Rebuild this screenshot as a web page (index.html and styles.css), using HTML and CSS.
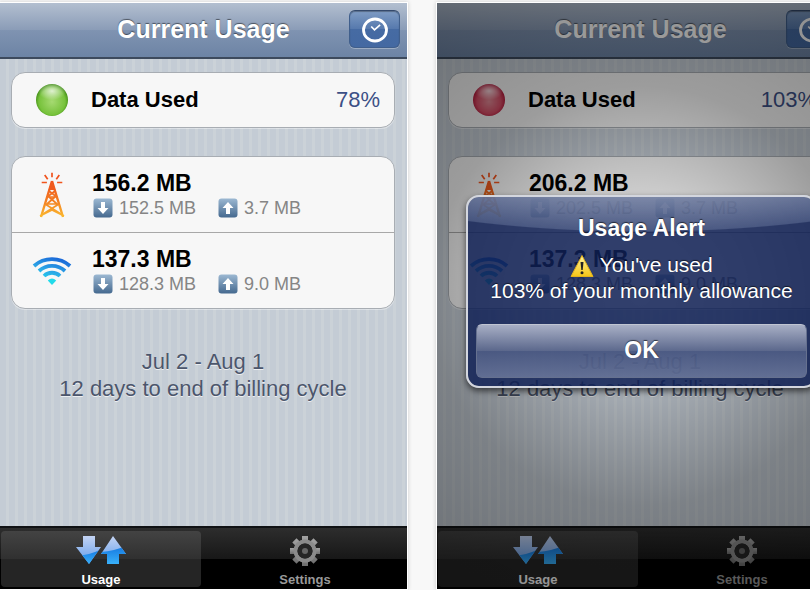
FILE: index.html
```html
<!DOCTYPE html>
<html lang="en">
<head>
    <meta charset="UTF-8">
    <meta name="viewport" content="width=device-width, initial-scale=1.0">
    <title>Current Usage</title>
    <link rel="stylesheet" href="styles.css">
</head>
<body>
    <!-- Shared icons -->
    <svg class="sprite" width="0" height="0" aria-hidden="true">
        <defs>
            <linearGradient id="towerFill" x1="0" y1="0" x2="0" y2="46" gradientUnits="userSpaceOnUse">
                <stop offset="0.2" stop-color="#f0521c"/>
                <stop offset="0.6" stop-color="#f27a22"/>
                <stop offset="1" stop-color="#fbbd30"/>
            </linearGradient>
            <linearGradient id="wifiFill" x1="26" y1="2" x2="18" y2="29" gradientUnits="userSpaceOnUse">
                <stop offset="0" stop-color="#1a68d8"/>
                <stop offset="0.5" stop-color="#2ba5e6"/>
                <stop offset="1" stop-color="#1fe0ee"/>
            </linearGradient>
            <linearGradient id="boxFill" x1="0" y1="0" x2="0" y2="1">
                <stop offset="0" stop-color="#9cb8d2"/>
                <stop offset="1" stop-color="#45698f"/>
            </linearGradient>
            <linearGradient id="arrowFill" x1="0" y1="0" x2="0" y2="1">
                <stop offset="0" stop-color="#c3d3f3"/>
                <stop offset="1" stop-color="#5f9bea"/>
            </linearGradient>
            <linearGradient id="arrowDeep" x1="0" y1="0" x2="0" y2="1">
                <stop offset="0" stop-color="#1477e0"/>
                <stop offset="1" stop-color="#3bb4fb"/>
            </linearGradient>
            <linearGradient id="gearFill" x1="0" y1="0" x2="0" y2="1">
                <stop offset="0" stop-color="#a3a3a3"/>
                <stop offset="1" stop-color="#6f6f6f"/>
            </linearGradient>
            <linearGradient id="warnFill" x1="0" y1="0" x2="0" y2="1">
                <stop offset="0" stop-color="#fff3a0"/>
                <stop offset="1" stop-color="#f5c515"/>
            </linearGradient>
            <clipPath id="downClip"><path d="M7 1h12v11h6L13 29 0 12h7z"/></clipPath>
            <clipPath id="upClip"><path d="M37 1l13 18h-7v10H31V19h-6z"/></clipPath>
        </defs>
        <symbol id="clock" viewBox="0 0 28 28">
            <ellipse cx="14" cy="14" rx="11.5" ry="11" fill="none" stroke="#fff" stroke-width="2.800"/>
            <path d="M10.200 10.500l3.300 3.300 5.600-5" fill="none" stroke="#fff" stroke-width="1.700"/>
        </symbol>
        <symbol id="tower" viewBox="0 0 28 46">
            <g fill="none" stroke="url(#towerFill)">
                <path d="M14 .7v4.6M6.700 3l3 4.300M21.300 3l-3 4.300M3.700 10.500h5.200M19.100 10.500h5.200" stroke-width="1.700"/>
                <path d="M14 9L3 45M14 9l11 36" stroke-width="2.400"/>
                <path d="M11 19l6.500 5M17 19l-6.500 5M10 24l9 8M18 24l-9 8M8.500 25h11M7 32h14M7 32l16 10M21 32L5 42M2 44l12-6 12 6" stroke-width="1.700"/>
            </g>
            <path d="M14 9l3.500 9h-7z" fill="#ef5a1e"/>
        </symbol>
        <symbol id="wifi" viewBox="0 0 40 30">
            <g fill="none" stroke="url(#wifiFill)" stroke-width="3.800">
                <path d="M2 10A27 27 0 0 1 38 10"/>
                <path d="M7 15A19 19 0 0 1 33 15"/>
                <path d="M12 20A11.500 11.500 0 0 1 28 20"/>
            </g>
            <path d="M15.800 24.500q4.200-4 8.400 0L20 29z" fill="#22dbea"/>
        </symbol>
        <symbol id="down" viewBox="0 0 20 20">
            <rect x=".5" y=".5" width="19" height="19" rx="3" fill="url(#boxFill)"/>
            <path d="M8 4h4v6h3.500L10 16 4.500 10H8z" fill="#fff"/>
        </symbol>
        <symbol id="up" viewBox="0 0 20 20">
            <rect x=".5" y=".5" width="19" height="19" rx="3" fill="url(#boxFill)"/>
            <path d="M10 4l5.500 6H12v6H8v-6H4.500z" fill="#fff"/>
        </symbol>
        <symbol id="updown" viewBox="0 0 50 30">
            <path d="M7 1h12v11h6L13 29 0 12h7z" fill="url(#arrowFill)"/>
            <path d="M37 1l13 18h-7v10H31V19h-6z" fill="url(#arrowFill)"/>
            <path d="M0 21q14-1 26-7v16H0z" fill="url(#arrowDeep)" clip-path="url(#downClip)"/>
            <path d="M24 17q14-1 26-6v19H24z" fill="url(#arrowDeep)" clip-path="url(#upClip)"/>
        </symbol>
        <symbol id="gear" viewBox="0 0 32 32">
            <g fill="url(#gearFill)">
                <path d="M13 1h6v5h-6zM13 26h6v5h-6z"/>
                <path d="M1 13h5v6H1zM26 13h5v6h-5z"/>
                <path d="M3.300 7.500l4.200-4.200 4 4-4.200 4.200zM20.500 24.700l4.200-4.200 4 4-4.200 4.200z"/>
                <path d="M24.500 3.300l4.200 4.200-4 4-4.200-4.200zM7.300 20.500l4.200 4.200-4 4-4.200-4.200z"/>
            </g>
            <circle cx="16" cy="16" r="9.500" fill="none" stroke="#8b8b8b" stroke-width="4"/>
            <circle cx="16" cy="16" r="7.500" fill="#262626"/>
            <circle cx="16" cy="16" r="3" fill="#666"/>
        </symbol>
        <symbol id="warning" viewBox="0 0 24 24">
            <path d="M12 1.500L23 22.500H1z" fill="url(#warnFill)" stroke="#e2b21c" stroke-width="1" stroke-linejoin="round"/>
            <path d="M10.500 8h3l-.8 8h-1.400z" fill="#222"/>
            <circle cx="12" cy="18.800" r="1.500" fill="#222"/>
        </symbol>
    </svg>

    <main class="gallery">
        <!-- Normal state -->
        <section class="phone">
            <header class="navbar">
                <h1 class="navbar-title">Current Usage</h1>
                <button class="navbar-button" type="button" aria-label="History"><svg class="icon-clock"><use href="#clock"/></svg></button>
            </header>
            <div class="content">
                <div class="card">
                    <div class="row summary">
                        <span class="row-icon"><span class="light green"></span></span>
                        <span class="summary-label">Data Used</span>
                        <span class="summary-value">78%</span>
                    </div>
                </div>
                <div class="card">
                    <div class="row">
                        <span class="row-icon"><svg class="icon-tower"><use href="#tower"/></svg></span>
                        <div class="row-text">
                            <div class="total">156.2 MB</div>
                            <div class="detail">
                                <span class="stat"><svg class="icon-box"><use href="#down"/></svg>152.5 MB</span>
                                <span class="stat"><svg class="icon-box"><use href="#up"/></svg>3.7 MB</span>
                            </div>
                        </div>
                    </div>
                    <div class="row">
                        <span class="row-icon"><svg class="icon-wifi"><use href="#wifi"/></svg></span>
                        <div class="row-text">
                            <div class="total">137.3 MB</div>
                            <div class="detail">
                                <span class="stat"><svg class="icon-box"><use href="#down"/></svg>128.3 MB</span>
                                <span class="stat"><svg class="icon-box"><use href="#up"/></svg>9.0 MB</span>
                            </div>
                        </div>
                    </div>
                </div>
                <p class="cycle">Jul 2 - Aug 1<br>12 days to end of billing cycle</p>
            </div>
            <nav class="tabbar">
                <a class="tab active" href="#usage"><svg class="icon-updown"><use href="#updown"/></svg>Usage</a>
                <a class="tab" href="#settings"><svg class="icon-gear"><use href="#gear"/></svg>Settings</a>
            </nav>
        </section>

        <!-- Over the limit, alert open -->
        <section class="phone">
            <header class="navbar">
                <h1 class="navbar-title">Current Usage</h1>
                <button class="navbar-button" type="button" aria-label="History"><svg class="icon-clock"><use href="#clock"/></svg></button>
            </header>
            <div class="content">
                <div class="card">
                    <div class="row summary">
                        <span class="row-icon"><span class="light red"></span></span>
                        <span class="summary-label">Data Used</span>
                        <span class="summary-value">103%</span>
                    </div>
                </div>
                <div class="card">
                    <div class="row">
                        <span class="row-icon"><svg class="icon-tower"><use href="#tower"/></svg></span>
                        <div class="row-text">
                            <div class="total">206.2 MB</div>
                            <div class="detail">
                                <span class="stat"><svg class="icon-box"><use href="#down"/></svg>202.5 MB</span>
                                <span class="stat"><svg class="icon-box"><use href="#up"/></svg>3.7 MB</span>
                            </div>
                        </div>
                    </div>
                    <div class="row">
                        <span class="row-icon"><svg class="icon-wifi"><use href="#wifi"/></svg></span>
                        <div class="row-text">
                            <div class="total">137.3 MB</div>
                            <div class="detail">
                                <span class="stat"><svg class="icon-box"><use href="#down"/></svg>128.3 MB</span>
                                <span class="stat"><svg class="icon-box"><use href="#up"/></svg>9.0 MB</span>
                            </div>
                        </div>
                    </div>
                </div>
                <p class="cycle">Jul 2 - Aug 1<br>12 days to end of billing cycle</p>
            </div>
            <nav class="tabbar">
                <a class="tab active" href="#usage"><svg class="icon-updown"><use href="#updown"/></svg>Usage</a>
                <a class="tab" href="#settings"><svg class="icon-gear"><use href="#gear"/></svg>Settings</a>
            </nav>
            <div class="overlay">
                <div class="alert" role="alertdialog" aria-labelledby="alertTitle" aria-describedby="alertText">
                    <h2 class="alert-title" id="alertTitle">Usage Alert</h2>
                    <p class="alert-text" id="alertText"><svg class="icon-warning"><use href="#warning"/></svg> You've used<br>103% of your monthly allowance</p>
                    <button class="alert-button" type="button">OK</button>
                </div>
            </div>
        </section>
    </main>
</body>
</html>
```
FILE: styles.css
```css
* {
    box-sizing: border-box;
}

body {
    margin: 0;
    background: #f8f8f8;
    font-family: "Liberation Sans", Arial, Helvetica, sans-serif;
}

h1, h2, p {
    margin: 0;
}

svg {
    display: block;
    flex: none;
}

.sprite {
    position: absolute;
}

/* Side by side screens, the strip scrolls sideways */
.gallery {
    display: flex;
    gap: 30px;
    min-height: 100vh;
    padding: 3px 0 1px;
    overflow-x: auto;
    scrollbar-width: none;
}

.phone {
    position: relative;
    display: flex;
    flex-direction: column;
    flex: 0 0 calc(50% + 2px);
    min-width: 370px;
    background: repeating-linear-gradient(90deg, #c4ccd5 0 6px, #cbd2d8 6px 9px);
    box-shadow: 0 0 0 1px #fff, 0 0 4px 1px #ccc;
}

/* Navigation bar */
.navbar {
    display: grid;
    grid-template-columns: 51px 1fr 51px;
    align-items: center;
    height: 56px;
    padding: 0 7px 3px;
    background: linear-gradient(#b3bfd0, #8a9cb7 50%, #7f93b1 51%, #6d84a5);
    border-bottom: 2px solid #3d4a5d;
}

.navbar-title {
    grid-column: 2;
    color: #fff;
    font-size: 25px;
    line-height: 30px;
    text-align: center;
    text-shadow: 0 -1px 1px rgba(0, 0, 0, 0.5);
}

.navbar-button {
    display: flex;
    align-items: center;
    justify-content: center;
    height: 38px;
    padding: 2px 0 0;
    background: linear-gradient(#7f9cc4, #5679ad 50%, #466ba3 51%, #4469a2);
    border: 1px solid #405f8c;
    border-top-color: #34496b;
    border-radius: 6px;
    box-shadow: 0 1px 0 rgba(255, 255, 255, 0.3), inset 0 1px 1px rgba(0, 0, 0, 0.3);
    cursor: pointer;
}

/* Grouped cells */
.content {
    flex: 1;
    padding: 13px 12px 0 11px;
}

.card {
    margin-bottom: 28px;
    background: #f7f7f7;
    border: 1px solid #a8adb3;
    border-radius: 14px;
    box-shadow: 0 1px 0 rgba(255, 255, 255, 0.4);
}

.row {
    display: flex;
    align-items: center;
    height: 75px;
}

.row + .row {
    height: 76px;
    border-top: 1px solid #a8a8a8;
}

.row-icon {
    display: flex;
    justify-content: center;
    flex: none;
    width: 79px;
}

.summary {
    height: 54px;
    padding-right: 14px;
}

.summary-label {
    flex: 1;
    color: #000;
    font-size: 22px;
    font-weight: bold;
}

.summary-value {
    color: #3c5086;
    font-size: 22px;
}

.light {
    width: 32px;
    height: 32px;
    border-radius: 50%;
}

.green {
    background: radial-gradient(ellipse 14px 9px at 50% 22%, rgba(255, 255, 255, 0.75), transparent), radial-gradient(circle at 50% 55%, #a6da72, #77c23b 55%, #3f8c14 72%);
}

.red {
    background: radial-gradient(ellipse 14px 9px at 50% 22%, rgba(255, 255, 255, 0.75), transparent), radial-gradient(circle at 50% 55%, #e28a96, #d64d66 50%, #b01436 72%);
}

.total {
    padding-left: 1px;
    color: #000;
    font-size: 23px;
    font-weight: bold;
    line-height: 26px;
}

.detail {
    display: flex;
    gap: 22px;
    padding-left: 2px;
    color: #858585;
    font-size: 18px;
    line-height: 24px;
}

.stat {
    display: flex;
    align-items: center;
    gap: 6px;
}

.cycle {
    padding-top: 11px;
    color: #4c566c;
    font-size: 22px;
    line-height: 27px;
    text-align: center;
    text-shadow: 0 1px 0 rgba(255, 255, 255, 0.7);
}

/* Tab bar */
.tabbar {
    display: flex;
    gap: 4px;
    height: 63px;
    padding: 3px 2px 2px 1px;
    background: linear-gradient(#2d2d2d, #181818 50%, #000 51%);
    border-top: 2px solid #101214;
}

.tab {
    display: flex;
    flex: 1;
    flex-direction: column;
    align-items: center;
    justify-content: space-between;
    padding-top: 4px;
    border-radius: 4px;
    color: #9a9a9a;
    font-size: 13px;
    font-weight: bold;
    line-height: 15px;
    text-decoration: none;
}

.active {
    background: linear-gradient(#434343, #303030 50%, #252525 51%);
    color: #fff;
}

/* Alert */
.overlay {
    position: absolute;
    inset: 0;
    display: flex;
    align-items: center;
    padding: 0 27px 9px 29px;
    background: radial-gradient(circle at 50% 50%, rgba(0, 0, 0, 0.08), rgba(0, 0, 0, 0.17) 100px, rgba(0, 0, 0, 0.37) 210px, rgba(0, 0, 0, 0.45) 360px);
}

.alert {
    width: 100%;
    padding: 17px 8px 8px;
    background: radial-gradient(ellipse 400px 105px at 50% -70px, rgba(190, 200, 220, 0.55) 66%, rgba(130, 145, 180, 0.35) 99%, transparent 100%), rgba(16, 32, 86, 0.84);
    background-clip: padding-box;
    border: 2px solid #d3d6de;
    border-radius: 13px;
    box-shadow: 0 3px 6px rgba(0, 0, 0, 0.6);
    color: #fff;
    text-align: center;
    text-shadow: 0 -1px 1px rgba(0, 0, 0, 0.6);
}

.alert-title {
    margin-bottom: 10px;
    font-size: 23px;
    line-height: 28px;
}

.alert-text {
    margin-bottom: 20px;
    font-size: 21px;
    line-height: 26px;
}

.alert-button {
    width: 100%;
    height: 54px;
    padding: 0 0 2px;
    background: linear-gradient(rgba(190, 196, 214, 0.85), rgba(120, 131, 162, 0.65) 50%, rgba(100, 114, 152, 0.6) 51%, rgba(130, 142, 174, 0.65));
    border: 1px solid #66718f;
    border-top-color: #c0c5d2;
    border-radius: 6px;
    color: #fff;
    font-family: inherit;
    font-size: 23px;
    font-weight: bold;
    text-shadow: 0 -1px 1px rgba(0, 0, 0, 0.6);
    cursor: pointer;
}

/* Icon sizes */
.icon-clock {
    width: 28px;
    height: 28px;
}

.icon-tower {
    width: 28px;
    height: 46px;
}

.icon-wifi {
    width: 40px;
    height: 30px;
}

.icon-box {
    width: 20px;
    height: 20px;
}

.icon-updown {
    width: 50px;
    height: 30px;
}

.icon-gear {
    width: 32px;
    height: 32px;
}

.icon-warning {
    display: inline-block;
    width: 24px;
    height: 24px;
    vertical-align: middle;
}
```
